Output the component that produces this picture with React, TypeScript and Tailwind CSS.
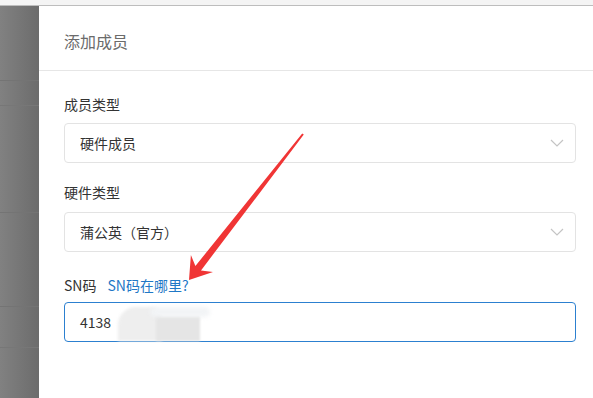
import React from "react";

const Chevron = () => (
  <svg width="14" height="8" viewBox="0 0 14 8" fill="none">
    <path d="M1 1 L7 7 L13 1" stroke="#c4c4c4" strokeWidth="1.2" />
  </svg>
);

export default function App() {
  return (
    <div
      className="relative w-[593px] h-[398px] overflow-hidden bg-white flex flex-col"
      style={{ fontFamily: '"Microsoft YaHei", "Noto Sans CJK SC", "Noto Sans", sans-serif' }}
    >
      <div className="h-[6px] shrink-0 bg-[#f4f4f4] border-b border-[#bdbdbd]" />
      <div className="flex flex-1">
        <div className="w-[39px] shrink-0 bg-gradient-to-r from-[#818181] to-[#6c6c6c] flex flex-col">
          <div className="h-[75px] border-b border-[#747474]" />
          <div className="h-[25px] border-b border-[#777777]" />
          <div className="h-[107px] border-b border-[#747474]" />
          <div className="h-[94px] border-b border-[#747474]" />
          <div className="h-[41px] border-b border-[#777777]" />
        </div>
        <div className="flex-1 flex flex-col bg-white">
          <div className="h-[65px] border-b border-[#e6e6e6] flex items-center pl-[25px]">
            <span className="text-[16px] text-[#6b6b6b] mt-[5px]">添加成员</span>
          </div>
          <div className="pl-[25px] pr-[17px] flex flex-col">
            <div className="mt-[23px] h-[20px] leading-[20px] text-[14px] text-[#333]">成员类型</div>
            <div className="mt-[9px] h-[40px] border border-[#e3e3e3] rounded-[4px] flex items-center justify-between pl-[15px] pr-[11px]">
              <span className="text-[14px] text-[#333]">硬件成员</span>
              <Chevron />
            </div>
            <div className="mt-[19px] h-[20px] leading-[20px] text-[14px] text-[#333]">硬件类型</div>
            <div className="mt-[10px] h-[40px] border border-[#e3e3e3] rounded-[4px] flex items-center justify-between pl-[15px] pr-[11px]">
              <span className="text-[14px] text-[#333]">蒲公英（官方）</span>
              <Chevron />
            </div>
            <div className="mt-[23px] h-[20px] leading-[20px] text-[14px] flex gap-[11px]">
              <span className="text-[#333]">SN码</span>
              <span className="text-[#1f78c6]">SN码在哪里?</span>
            </div>
            <div className="mt-[7px] h-[40px] border border-[#2c80d0] rounded-[4px] flex items-center pl-[15px]">
              <span className="text-[14px] text-[#333]">4138</span>
            </div>
          </div>
        </div>
      </div>

      <div className="absolute left-[118px] top-[307px] w-[44px] h-[34px] bg-[#eeeeee] rounded-tl-[18px] rounded-tr-[10px] blur-[1.5px]" />
      <div className="absolute left-[156px] top-[316px] w-[44px] h-[25px] bg-[#e5e5e5] blur-[1px]" />
      <div className="absolute left-[150px] top-[307px] w-[60px] h-[10px] bg-[#f2f4f6] rounded-full blur-[2px]" />

      <svg className="absolute left-0 top-0" width="593" height="398" viewBox="0 0 593 398">
        <polygon
          points="189,280 213,272 201,270.4 303.8,134.6 302.2,133.4 195.4,266 190.9,255"
          fill="#f03535"
        />
      </svg>
    </div>
  );
}
